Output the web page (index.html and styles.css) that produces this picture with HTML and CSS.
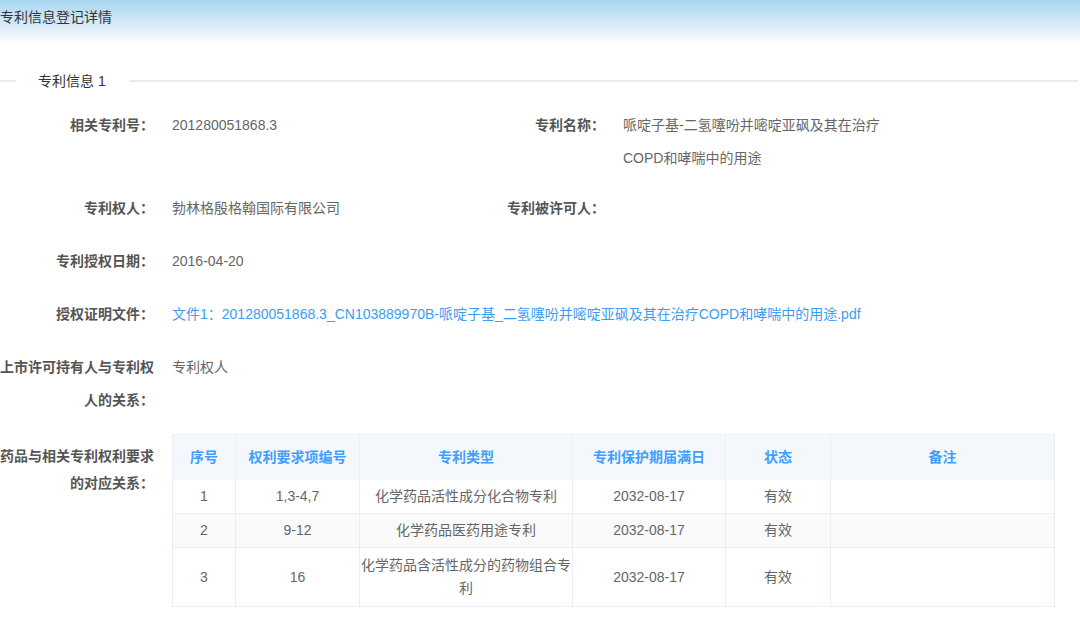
FILE: index.html
```html
<!DOCTYPE html>
<html lang="zh-CN">
<head>
    <meta charset="UTF-8">
    <title>专利信息登记详情</title>
    <link rel="stylesheet" href="styles.css">
</head>
<body>
<div class="page-head">专利信息登记详情</div>

<fieldset class="patent-box">
    <legend>专利信息 1</legend>
    <div class="info-grid">
        <div class="field first">
            <div class="label">相关专利号：</div>
            <div class="val">201280051868.3</div>
        </div>
        <div class="field first">
            <div class="label">专利名称：</div>
            <div class="val">哌啶子基-二氢噻吩并嘧啶亚砜及其在治疗COPD和哮喘中的用途</div>
        </div>
        <div class="field">
            <div class="label">专利权人：</div>
            <div class="val">勃林格殷格翰国际有限公司</div>
        </div>
        <div class="field">
            <div class="label">专利被许可人：</div>
            <div class="val"></div>
        </div>
        <div class="field wide">
            <div class="label">专利授权日期：</div>
            <div class="val">2016-04-20</div>
        </div>
        <div class="field wide">
            <div class="label">授权证明文件：</div>
            <div class="val"><a class="file-link" href="#">文件1：201280051868.3_CN103889970B-哌啶子基_二氢噻吩并嘧啶亚砜及其在治疗COPD和哮喘中的用途.pdf</a></div>
        </div>
        <div class="field wide">
            <div class="label">上市许可持有人与专利权人的关系：</div>
            <div class="val">专利权人</div>
        </div>
        <div class="field wide table-field">
            <div class="label">药品与相关专利权利要求的对应关系：</div>
            <div class="val">
                <table class="claim-table">
                    <colgroup>
                        <col style="width:63px">
                        <col style="width:124px">
                        <col style="width:213px">
                        <col style="width:153px">
                        <col style="width:105px">
                        <col>
                    </colgroup>
                    <thead>
                    <tr>
                        <th>序号</th>
                        <th>权利要求项编号</th>
                        <th>专利类型</th>
                        <th>专利保护期届满日</th>
                        <th>状态</th>
                        <th>备注</th>
                    </tr>
                    </thead>
                    <tbody>
                    <tr>
                        <td>1</td>
                        <td>1,3-4,7</td>
                        <td>化学药品活性成分化合物专利</td>
                        <td>2032-08-17</td>
                        <td>有效</td>
                        <td></td>
                    </tr>
                    <tr class="stripe">
                        <td>2</td>
                        <td>9-12</td>
                        <td>化学药品医药用途专利</td>
                        <td>2032-08-17</td>
                        <td>有效</td>
                        <td></td>
                    </tr>
                    <tr class="tall">
                        <td>3</td>
                        <td>16</td>
                        <td>化学药品含活性成分的药物组合专利</td>
                        <td>2032-08-17</td>
                        <td>有效</td>
                        <td></td>
                    </tr>
                    </tbody>
                </table>
            </div>
        </div>
    </div>
</fieldset>
</body>
</html>
```

FILE: styles.css
```css
*{
    margin: 0;
    padding: 0;
    box-sizing: border-box;
}
body{
    font-family: "Liberation Sans", "Noto Sans CJK SC", sans-serif;
    font-size: 14px;
    color: #666;
    background-color: #fff;
    overflow: hidden;
}
.page-head{
    height: 43px;
    line-height: 34px;
    color: #333;
    background: linear-gradient(#a8d6ef, #e6f2fa 75%, #fff);
}
.patent-box{
    border: 0;
    border-top: 2px solid #ebebeb;
    margin: 28px 2px 0 0;
    padding: 0 23px 13px 0;
}
.patent-box legend{
    margin-left: 16px;
    padding: 0 23px 0 22px;
    line-height: 20px;
    color: #333;
}
.info-grid{
    display: grid;
    grid-template-columns: 451px 451px;
    row-gap: 20px;
    padding-top: 18px;
}
.field{
    display: flex;
    gap: 18px;
    line-height: 33px;
}
.field.first{
    margin-bottom: -3px;
}
.field.wide{
    grid-column: 1 / -1;
}
.label{
    width: 154px;
    flex: none;
    text-align: right;
    font-weight: bold;
    color: #555;
}
.val{
    flex: 1;
    min-width: 0;
}
.file-link{
    color: #3d9cf3;
    text-decoration: none;
}
.table-field{
    margin-top: -3px;
}
.table-field .label{
    line-height: 27px;
    padding-top: 9px;
}
.claim-table{
    width: 883px;
    table-layout: fixed;
    border-collapse: collapse;
    border: 1px solid #ebeef5;
    line-height: 23px;
    text-align: center;
}
.claim-table th{
    padding: 11px 0;
    background-color: #f4f8fc;
    color: #409eff;
    font-weight: bold;
    border-right: 1px solid #ebeef5;
}
.claim-table td{
    padding: 5px 1px;
    border-right: 1px solid #ebeef5;
    border-top: 1px solid #ebeef5;
}
.claim-table thead + tbody tr:first-child td{
    border-top: 0;
}
.claim-table .tall td{
    padding: 6px 1px;
}
.claim-table .stripe td{
    background-color: #fafafa;
}
```
